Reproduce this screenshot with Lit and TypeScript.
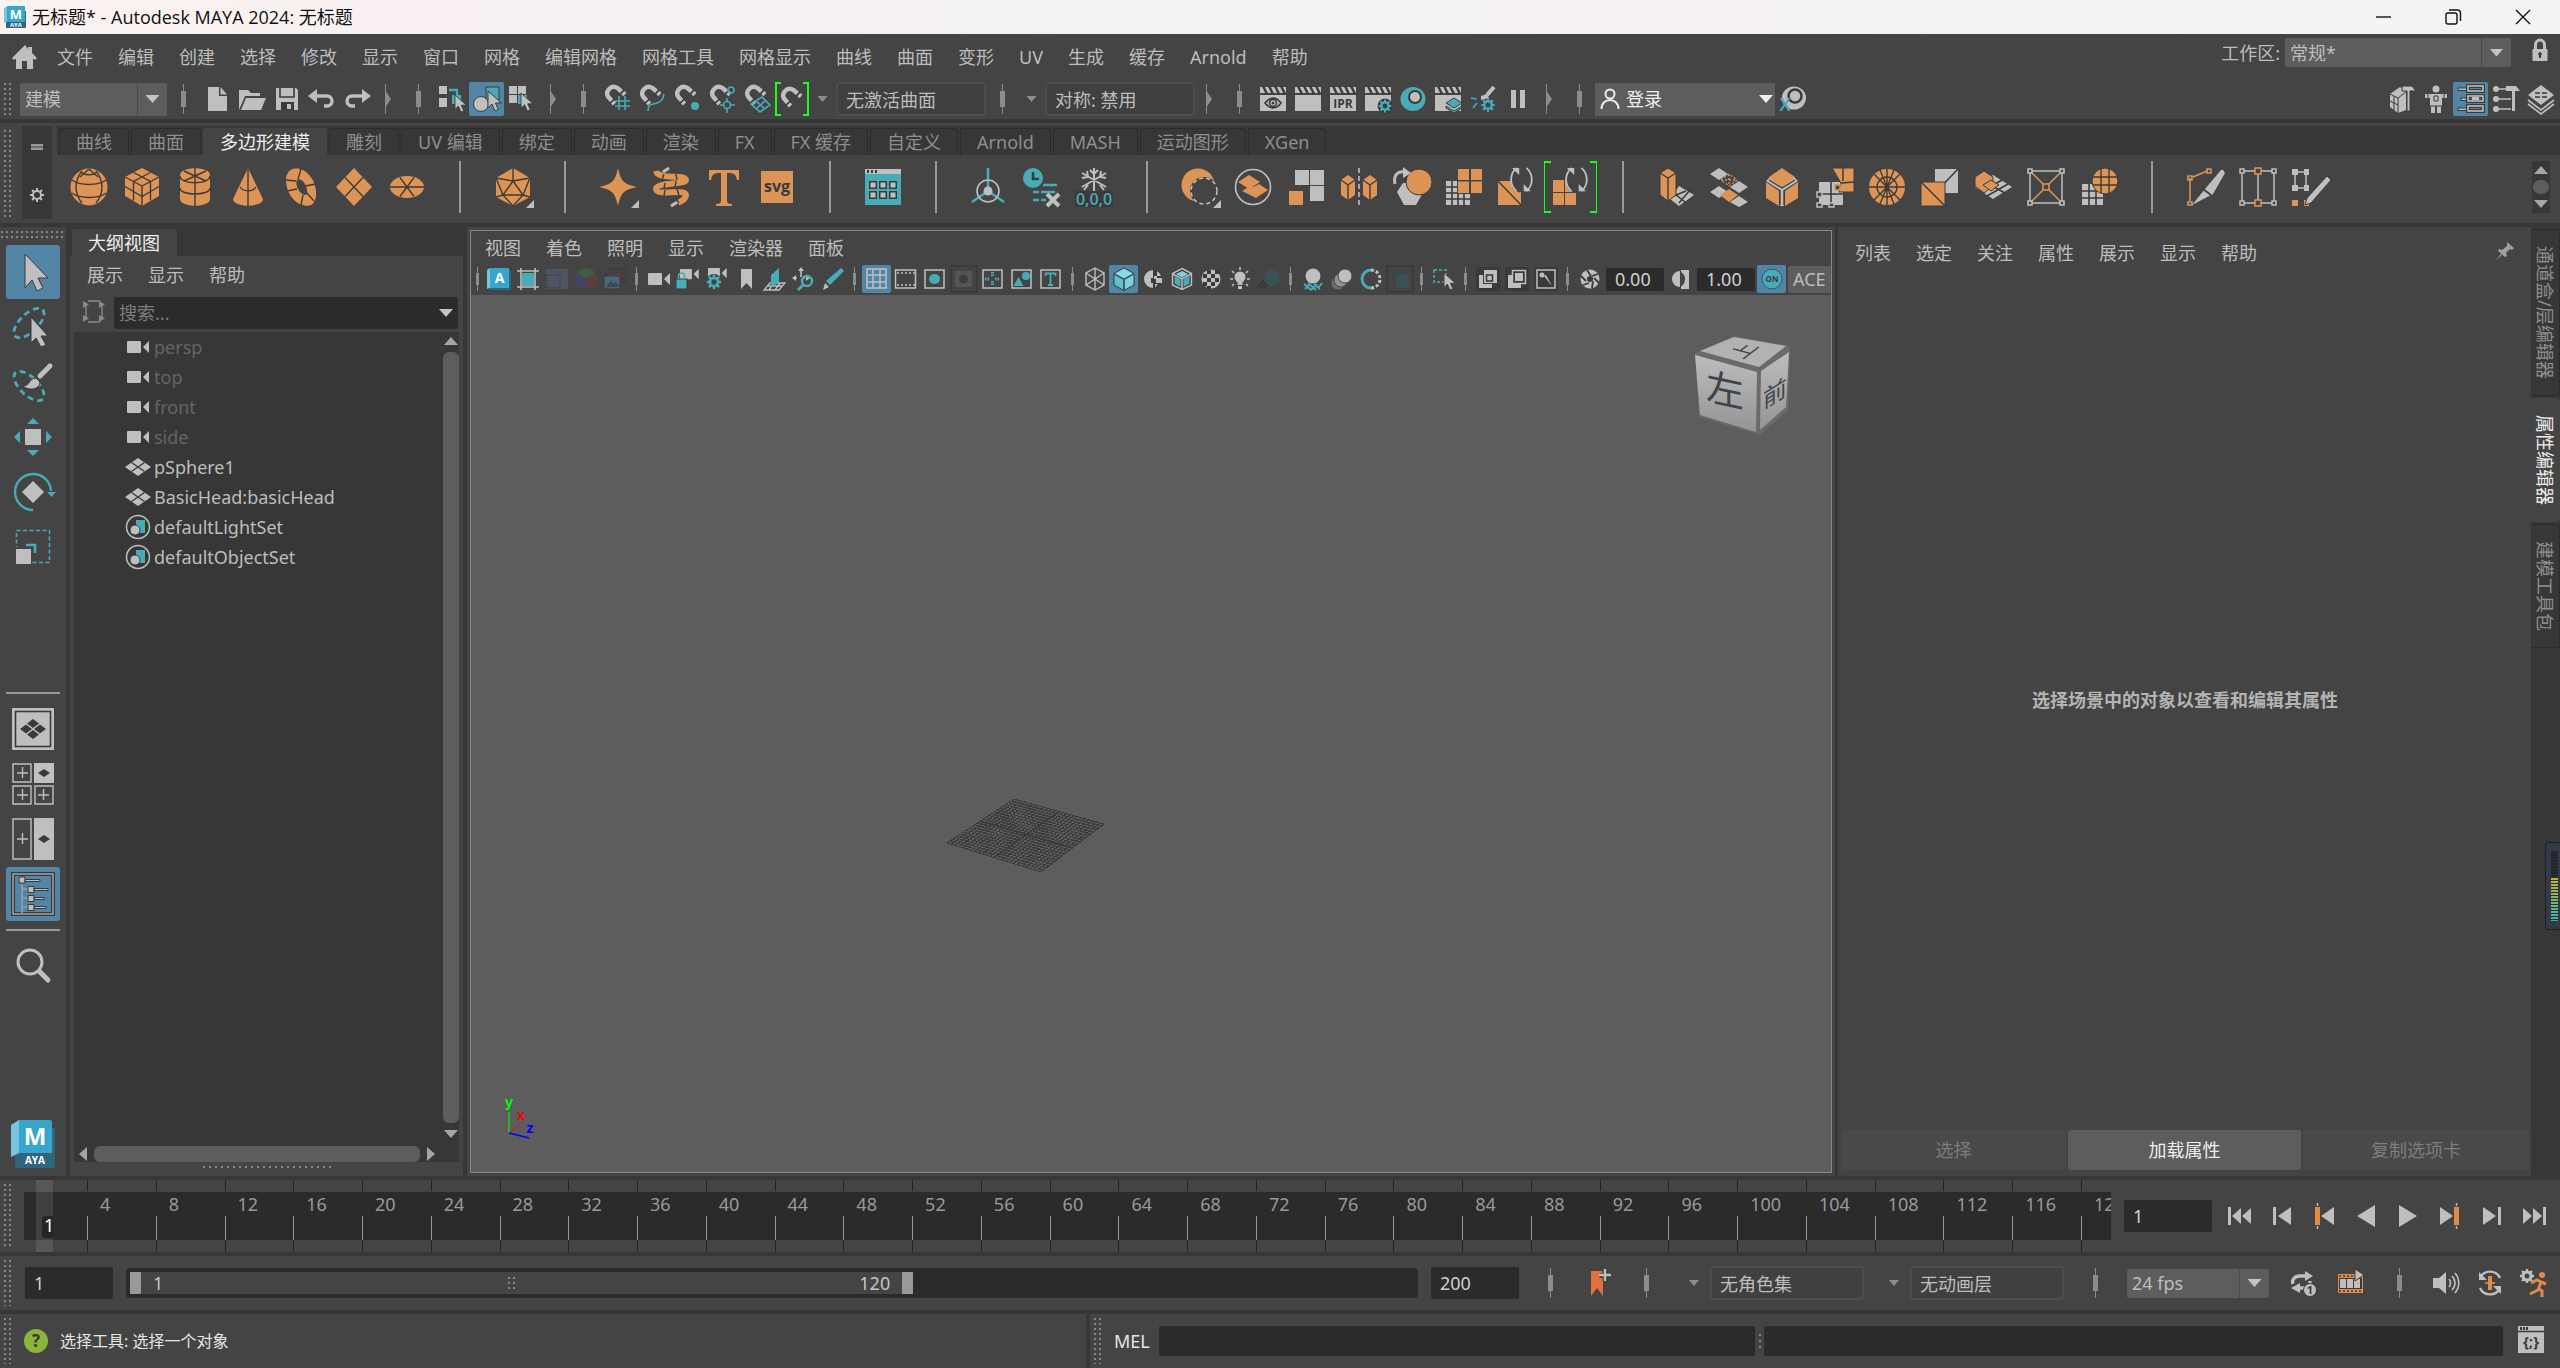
import { LitElement, html, css, svg, nothing, TemplateResult, SVGTemplateResult } from 'lit';
import { customElement, property, state } from 'lit/decorators.js';
import { classMap } from 'lit/directives/class-map.js';

type Glyph = [number, SVGTemplateResult];

const HORSESHOE = svg`
  <path class="sg" stroke-width="4.4" d="M12.5 20 6 12.5A6.6 6.6 0 0 1 15.5 4L23 10.5"/>
  <path class="sd" stroke-width="1.6" d="M7.6 19.4l5-4.4M17.8 10.6l4.4-5"/>`;

const CLAPPER = svg`
  <rect class="g" x="2" y="11" width="26" height="16"/>
  <rect class="g" x="2" y="3" width="26" height="6"/>
  <path class="sd" stroke-width="2.4" d="M5 2l4 8M11 2l4 8M17 2l4 8M23 2l4 8"/>`;

const POINTER = svg`<path class="g e" d="M0 0v17l4-4 3 7 3.400-1.500-3-6.500h6z"/>`;

const GEAR_T = svg`
  <circle class="st" stroke-width="3" cx="0" cy="0" r="4.500"/>
  <path class="st" stroke-width="2.600" d="M0-8v3M0 5v3M-8 0h3M5 0h3M-5.700-5.700l2.200 2.200M3.500 3.500l2.200 2.200M-5.700 5.700l2.200-2.200M3.500-3.500l2.200-2.200"/>`;

const CAMERA = svg`<rect class="g" x="0" y="0" width="14" height="12" rx="1"/><path class="g" d="M16 6l6-6v12z"/>`;

const SWIRL = svg`<path class="sg" stroke-width="2" d="M5 1C-3 8-3 20 5 27M16 1c8 7 8 19 0 26"/><path class="g" d="M0 1h8v8zM21 27h-8v-8z"/>`;

const GLYPHS: Record<string, Glyph> = {
  // menu bar
  home: [30, svg`<path class="g" d="M15 3 2 16l2 2 2-1.500V27h6v-8h5v8h6V16.500l2 1.500 2-2-5-5V5h-4v2z"/>`],
  lock: [24, svg`<path class="sg" stroke-width="3" d="M7.500 12V7a4.500 5 0 0 1 9 0v5"/><rect class="g" x="4.500" y="11" width="15" height="12" rx="1"/><path class="d" d="M12 14a2 2 0 0 1 1 3.500v2.500h-2v-2.500a2 2 0 0 1 1-3.500z"/>`],
  minimize: [20, svg`<path class="sk" d="M3 10h15"/>`],
  restore: [20, svg`<rect class="sk" x="3" y="6" width="11" height="11" rx="2"/><path class="sk" d="M6 3h8.500a3 3 0 0 1 3 3V14"/>`],
  close: [20, svg`<path class="sk" d="M3 3l14 14M17 3 3 17"/>`],
  maya: [54, svg`<g transform="translate(-4 0)">
    <path fill="#2f657f" d="M13 12h40v38a2 2 0 0 1-2 2H15a2 2 0 0 1-2-2z"/>
    <path fill="#7ac5de" d="M9 9l8-5v33l-8 4z"/>
    <path fill="#37a5cc" d="M17 4h31a2 2 0 0 1 2 2v31H17z"/>
    <text x="33" y="29" class="mark" font-size="24">M</text>
    <text x="33" y="48" class="mark" font-size="10">AYA</text></g>`],
  mayaSmall: [24, svg`
    <path fill="#2f657f" d="M3 6h20v16a1 1 0 0 1-1 1H3z"/>
    <path fill="#7ac5de" d="M1 3l4-2v15l-4 2z"/>
    <path fill="#37a5cc" d="M4 1h18v16H4z"/>
    <text x="13" y="14" class="mark" font-size="13">M</text>
    <text x="13" y="22" class="mark" font-size="6">AYA</text>`],

  // status line
  fileNew: [30, svg`<path class="g" d="M6 3h11v9h8v15H6z"/><path class="g" d="M18.500 3l6.500 7.500h-6.500z"/>`],
  fileOpen: [30, svg`<path class="g" d="M2 26V6h9l3 3h9v3H8z"/><path class="g" d="M9 14h20l-5 12H4z"/>`],
  fileSave: [30, svg`<path class="g" d="M4 4h20l2 2v20H4z"/><path class="sd" d="M8 4v9h14V4"/><rect class="d" x="9" y="18" width="13" height="8"/><rect class="g" x="15" y="20" width="4" height="5"/>`],
  undo: [30, svg`<path class="sg" stroke-width="3.400" d="M7 12h13a5 5 0 0 1 0 10h-3"/><path class="g" d="M10 5v14l-9-7z"/>`],
  redo: [30, svg`<path class="sg" stroke-width="3.400" d="M23 12H10a5 5 0 0 0 0 10h3"/><path class="g" d="M20 5v14l9-7z"/>`],
  selHierarchy: [30, svg`<rect class="g" x="2" y="2" width="8" height="8"/><rect class="g" x="2" y="14" width="8" height="9"/><path class="sd" stroke-width="1" d="M6 10v4"/><path class="st" stroke-width="2.400" d="M12 6h8v7"/><rect class="t" x="15" y="11" width="9" height="9"/><g transform="translate(18 11) scale(.85)">${POINTER}</g>`],
  selObject: [34, svg`<rect class="t e" x="16" y="5" width="13" height="14"/><circle class="g e" cx="11" cy="22" r="7.500"/><g transform="translate(18 9)">${POINTER}</g>`],
  selComponent: [30, svg`<rect class="g" x="2" y="2" width="8" height="8"/><rect class="g" x="11" y="2" width="8" height="8"/><rect class="g" x="2" y="11" width="8" height="8"/><rect class="t" x="11" y="11" width="9" height="9"/><g transform="translate(14 9) scale(.9)">${POINTER}</g>`],
  snapGrid: [30, svg`${HORSESHOE}<path class="st" d="M17 12v14M23 12v14M13 17h15M13 22h15"/>`],
  snapCurve: [30, svg`${HORSESHOE}<path class="st" d="M11 27c0-8 4-6 9-8s6-4 7-9"/>`],
  snapPoint: [30, svg`${HORSESHOE}<circle class="t" cx="23" cy="22" r="4"/>`],
  snapCenter: [30, svg`${HORSESHOE}<circle class="st" cx="24" cy="6" r="3"/><circle class="st" cx="20" cy="21" r="3.500"/><path class="st" d="M20 14v3M20 25v4M13 21h3M24 21h4"/>`],
  snapPlane: [30, svg`${HORSESHOE}<path class="st" d="M9 20l11-7 8 8-10 7zM14 17l9 8M23 17l-9 8"/>`],
  makeLive: [34, svg`<g transform="translate(3 4)">${HORSESHOE}</g><path class="sl" d="M6 1H1v32h5M28 1h5v32h-5"/>`],
  renderEye: [30, svg`${CLAPPER}<path class="sd" stroke-width="1.600" d="M7 19c5-6.500 11-6.500 16 0-5 6.500-11 6.500-16 0z"/><circle class="sd" stroke-width="1.500" cx="15" cy="19" r="3.500"/><circle class="d" cx="15" cy="19" r="1.500"/>`],
  renderFrame: [30, svg`${CLAPPER}`],
  renderIpr: [30, svg`${CLAPPER}<text x="15" y="24" class="ink" font-size="12">IPR</text>`],
  renderSettings: [30, svg`${CLAPPER}<circle class="d" cx="22" cy="22" r="7.500"/><g transform="translate(22 22) scale(.8)">${GEAR_T}</g>`],
  hypershade: [30, svg`<ellipse class="t" cx="15" cy="15" rx="12.500" ry="12"/><circle class="d" cx="17" cy="13" r="7"/><circle class="g" cx="17" cy="13" r="5"/>`],
  renderSetup: [30, svg`${CLAPPER}<path class="t e" d="M21 14l8 5-8 5-8-5z"/><path class="t e" d="M13 22l8 5 8-5v2l-8 5-8-5z"/>`],
  lightEditor: [30, svg`<path class="sg" stroke-width="4" d="M26 3l-7 8"/><path class="g" d="M13 12l6-2 2 4-8 2z"/><path class="st" d="M3 14l6 1M5 24l4-5"/><g transform="translate(20 21) scale(.85)">${GEAR_T}</g>`],
  pause: [30, svg`<rect class="g" x="8" y="6" width="5" height="18"/><rect class="g" x="17" y="6" width="5" height="18"/>`],
  user: [24, svg`<circle class="sw" cx="12" cy="7" r="4.500"/><path class="sw" d="M3.500 22c0-12 17-12 17 0"/>`],
  xgenRing: [34, svg`<ellipse class="g" cx="18" cy="16" rx="12" ry="11.500"/><circle class="sd" stroke-width="2.500" cx="19" cy="14" r="6.500"/><text x="9" y="29" class="teal" font-size="18">X</text>`],
  modelingKit: [34, svg`<path class="g" d="M6 12l10-7 6 4v19l-8 3-8-6z"/><path class="sd" stroke-width="1" d="M6 12l8 4 8-6M14 16v15M10 14v14M6 19l8 4"/><path class="g e" d="M18 4h10l4 5h-6v20h-3V9h-5z"/>`],
  humanIk: [34, svg`<circle class="g" cx="17" cy="7" r="3.500"/><path class="g" d="M6 12h22v4h-5v7l-1 2v6h-4v-7h-2v7h-4v-6l-1-2v-7H6z"/><path class="sd" stroke-width="1" d="M9 12v4M25 12v4M15 14h4v5h-4zM11 24h12"/>`],
  channelBox: [34, svg`<g class="e g"><rect x="4" y="6" width="10" height="2.500"/><rect x="7" y="16" width="8" height="2.500"/><rect x="4" y="26" width="10" height="2.500"/></g><g fill="#5285a6" stroke="#3a3a3a" stroke-width="4"><rect x="14" y="4" width="15" height="5"/><rect x="14" y="14" width="15" height="5"/><rect x="14" y="24" width="15" height="5"/></g><g class="sg"><rect x="14" y="4" width="15" height="5"/><rect x="14" y="14" width="15" height="5"/><rect x="14" y="24" width="15" height="5"/></g><path class="g" d="M18 15h7v3h-7z"/>`],
  toolSettings: [34, svg`<circle class="g" cx="7" cy="7" r="3"/><circle class="g" cx="7" cy="17" r="3"/><circle class="g" cx="7" cy="27" r="3"/><path class="sg" d="M10 7h8M10 17h12M10 27h12"/><path class="g" d="M17 4h10l4 5h-5v20h-3V9h-6z"/>`],
  layerStack: [34, svg`<path class="g" d="M17 3l13 10-13 10L4 13z"/><path class="sg" d="M4 18l13 10 13-10M4 22l13 10 13-10"/><path class="sd" stroke-width="1.500" d="M11 11h5M18 11h5M11 15h5M18 15h5"/>`],

  // shelf
  sphere: [40, svg`<circle class="o" cx="20" cy="20" r="18.500"/><path class="se" d="M3 13c8 6 26 6 34 0M3 26c8 6 26 6 34 0M13 4c-8 10-8 22 0 32M27 4c8 10 8 22 0 32M12 4c2 5 14 5 16 0M20 2l-9 8M20 2l9 8"/>`],
  cube: [40, svg`<path class="o" d="M20 1l17 9v19l-17 10L3 29V10z"/><path class="se" d="M3 10l17 9 17-9M20 19v20M11.500 5.500l17 9v19M28.500 5.500l-17 9v19M3 19.500l17 10 17-10"/>`],
  cylinder: [40, svg`<path class="o" d="M5 8C5-1 35-1 35 8v24c0 9-30 9-30 0z"/><path class="se" d="M5 9c0 9 30 9 30 0M5 21c0 8 30 8 30 0M9 4l22 10M31 4 9 14M20 1v38"/>`],
  cone: [40, svg`<path class="o" d="M20 1l15 31c0 9-30 9-30 0z"/><path class="se" d="M20 2v37M12 20c3 5 13 5 16 0"/>`],
  torus: [40, svg`<path class="o" fill-rule="evenodd" d="M12 2C22-1 34 10 35 24c1 12-5 17-13 14C12 36 5 24 5 13 5 7 8 3 12 2zM17 12c-4 2 0 15 7 16 5 0 1-16-7-16z"/><path class="se" d="M5 13l10 1M17 12l3-10M24 19l11-2M22 28l-2 10M16 22L6 24M25 25l8 9"/>`],
  plane: [40, svg`<path class="o" d="M20 1l18 19-18 19L2 20z"/><path class="se" d="M11 10.500l18 19M29 10.500l-18 19"/>`],
  disc: [40, svg`<ellipse class="o" cx="20" cy="20" rx="17" ry="11"/><path class="se" d="M3 20h34M13 10.500l14 19M27 10.500l-14 19"/>`],
  platonic: [40, svg`<path class="o" d="M20 1l17 10v19L20 39 3 30V11z"/><path class="se" d="M3 11l17 3 17-3M20 1v13L10 28l10 11 10-11-10-14M3 11l7 17-7 2M37 11l-7 17 7 2M10 28h20"/><path class="g" d="M41 33v8h-8z"/>`],
  star: [40, svg`<path class="o" d="M20 1c3 13 5 16 19 19-14 3-16 6-19 19C17 26 15 23 1 20 15 17 17 14 20 1z"/><path class="g" d="M41 33v8h-8z"/>`],
  helix: [40, svg`<path class="sg" stroke-width="3" d="M12 5l6-4M20 39l8-5"/><path class="so" stroke-width="6" d="M5 4C7 14 34 6 35 13C35 18 5 15 5 22C6 30 34 21 35 28C35 32 32 33 27 36"/><path class="se" d="M13 7l-2 6M25 7l1 6M25 14l-1 6M14 16l-1 5M14 23l-1 6M26 22l2 6M24 31l4 5"/>`],
  type: [40, svg`<path class="o" d="M5 3h30v10h-2c-1-6-3-7-10-7v27c0 3 1 4 5 4v2H12v-2c4 0 5-1 5-4V6C10 6 8 7 7 13H5z"/>`],
  svgImport: [40, svg`<rect class="o" x="4" y="4" width="32" height="32"/><text x="20" y="25" class="ink" font-size="16">svg</text>`],
  contentBrowser: [40, svg`<rect class="t" x="2" y="2" width="36" height="36"/><rect class="g" x="2" y="2" width="36" height="5"/><path class="d" d="M4 3h2v3H4zM8 3h2v3H8zM12 3h2v3h-2zM6 14h8v8H6zM16 14h8v8h-8zM26 14h8v8h-8zM6 24h8v8H6zM16 24h8v8h-8zM26 24h8v8h-8z"/><path class="g" d="M7.500 15.500h5v5h-5zM17.500 15.500h5v5h-5zM27.500 15.500h5v5h-5zM7.500 25.500h5v5h-5zM17.500 25.500h5v5h-5zM27.500 25.500h5v5h-5z"/>`],
  orient: [40, svg`<path class="st" d="M20 1v20M20 24L4 35M20 24l16 11" stroke-width="2.500"/><circle class="sg" cx="20" cy="24" r="11"/><circle class="g" cx="20" cy="24" r="4.500"/>`],
  history: [40, svg`<circle class="t" cx="12" cy="11" r="10"/><path class="sd" stroke-width="2.500" d="M12 5v7h6"/><path class="st" stroke-width="2.500" d="M22 18h14M12 25h6M20 25h14M12 33h6M20 33h5"/><path class="sg" stroke-width="4" d="M26 27l12 12M38 27L26 39"/>`],
  freeze: [40, svg`<path class="sg" stroke-width="2" d="M20 1v24M8 6l24 14M32 6L8 20M16 3l4 4 4-4M8 11l6-1-1-6M32 11l-6-1 1-6M10 23l4-5M30 23l-4-5"/><rect class="d" x="1" y="24" width="38" height="16"/><text x="20" y="38" class="teal" font-size="16">0,0,0</text>`],
  booleanDiff: [40, svg`<circle class="o" cx="18" cy="18" r="16.500"/><circle class="d0" cx="24" cy="24" r="14"/><circle class="sg" cx="24" cy="24" r="13" stroke-dasharray="4 3"/><path class="g" d="M41 33v8h-8z"/>`],
  combine: [40, svg`<circle class="sg" cx="20" cy="20" r="17.500"/><path class="o" d="M5 15l11-7 11 7-11 7zM9 24l8-5 3 1 6-3 9 6-12 8z"/><path class="o" d="M5 17l8 5"/>`],
  separate: [40, svg`<path class="g" d="M9 3h14v15H9zM24 3h14v15H24zM24 19h14v15H24z"/><rect class="o" x="3" y="24" width="14" height="14"/>`],
  mirror: [40, svg`<path class="o" d="M2 13l7-5 7 5v15l-7 5-7-5zM24 13l7-5 7 5v15l-7 5-7-5z"/><path class="se" d="M2 13l7 5 7-5M9 18v15M24 13l7 5 7-5M31 18v15"/><path class="sg" stroke-dasharray="5 3" d="M20 1v38"/>`],
  smooth: [40, svg`<path class="g" d="M11 16h15l6 8-8 14H12L5 25z"/><circle class="o e" cx="27" cy="15" r="13"/><path class="sg" stroke-width="3" d="M3 17C1 8 6 4 12 5"/><path class="g" d="M11 0l8 6-8 5z"/>`],
  fillHole: [40, svg`<path class="g" d="M2 14h24v24H2z"/><path class="sd" d="M8 14v24M14 14v24M20 14v24M2 20h24M2 26h24M2 32h24"/><rect class="d0" x="13" y="1" width="26" height="26"/><path class="o" d="M14 2h11v11H14zM27 2h11v11H27zM14 14.500h11V26H14zM27 14.500h11V26H27z"/>`],
  triangulate: [40, svg`<path class="o" d="M1 14h23v24H1z"/><path class="se" d="M1 14l23 24"/><g transform="translate(15 0) scale(.9)"><rect class="d0" x="0" y="0" width="22" height="28" rx="8"/>${SWIRL}</g>`],
  quadrangulate: [48, svg`<path class="o" d="M7 17h11v12H7zM19 17h11v12H19zM7 30h11v12H7zM19 30h11v12H19z"/><g transform="translate(21 4) scale(.9)"><rect class="d0" x="0" y="0" width="22" height="28" rx="8"/>${SWIRL}</g>`],
  extrude: [40, svg`<path class="g" d="M23 19l15 9-15 11-9-7z"/><path class="sd" d="M15 30l15-6M23 36l11-13M19 27l10 8"/><path class="o e" d="M4 6l8-5 8 5v22l-8 6-8-6z"/><path class="se" d="M4 6l8 5 8-5M12 11v22"/>`],
  bridge: [40, svg`<path class="g" d="M1 7l9-6 9 6-9 6zM21 20l9-6 9 6-9 6zM1 25l9-6 9 6-9 6zM21 35l9-6 9 6-9 5z"/><path class="o" d="M11 28l9-6 9 6-9 7z"/><path class="so" stroke-width="1.300" stroke-dasharray="2 2" d="M12 13l8-6 8 6-8 6zM12 13h16M20 7v12"/>`],
  bevel: [40, svg`<path class="o" d="M20 1l13 9v3L20 20 7 13v-3z"/><path class="o" d="M4 15l13 9v15L4 31zM36 15l-13 9v15l13-8z"/><path class="g" d="M7 11l13 9 13-9 3 3-14 9v16h-4V23L4 14z"/><path class="se" d="M7 13l13 8 13-8M18 23v15M22 23v15"/>`],
  bevelPlane: [40, svg`<path class="g" d="M4 15h24v23H4z"/><path class="sd" d="M16 15v23M4 27h24"/><path class="o e" d="M17 1h22v24H24l2-9z"/><path class="se" d="M26 16l13-1M28 1v13"/><path class="d0 eg" d="M2 25h5v5H2zM2 36h5v4H2zM14 36h5v4h-5z"/><rect class="d0 eo" x="20" y="18" width="5" height="5"/>`],
  circularize: [40, svg`<circle class="o" cx="20" cy="20" r="18"/><circle class="se" cx="20" cy="20" r="10"/><path class="se" d="M2 20h36M20 2v36M7 7l26 26M33 7 7 33M13 3l14 34M27 3 13 37"/>`],
  collapseEdge: [40, svg`<path class="g" d="M15 2h23v24H15z"/><path class="sd" d="M38 2L15 26"/><path class="o e" d="M1 15h24v24H1z"/><path class="se" d="M1 15l24 24"/>`],
  connect: [40, svg`<path class="g" d="M20 8l19 12-19 12L2 20z"/><path class="sd" d="M8 25l21-12M14 29l21-12M8 13l24 13"/><path class="o e" d="M2 10l9-6 9 6v9l-9 7-9-7z"/><path class="o e" d="M10 18l8-5 8 5-8 6z"/>`],
  targetWeld: [40, svg`<path class="sg" stroke-width="1.500" d="M6 4h28M6 36h28M4 6v28M36 6v28"/><path class="so" stroke-width="1.500" d="M6 6l11 11M34 6L23 17M6 34l11-11M34 34L23 23"/><path class="sg" stroke-width="1.600" d="M2 2h4v4H2zM34 2h4v4h-4zM2 34h4v4H2zM34 34h4v4h-4z"/><rect class="so" x="17" y="17" width="6" height="6"/>`],
  projectCurve: [40, svg`<path class="g" d="M3 17h21v21H3z"/><path class="sd" d="M10 17v21M17 17v21M3 24h21M3 31h21"/><circle class="o e" cx="26" cy="14" r="13"/><path class="se" d="M14 10h24M14 18h24M22 2v24M30 2v24"/>`],
  multiCut: [40, svg`<path class="so" stroke-width="1.500" d="M5 11v23M8 10l14-6"/><path class="so" d="M3 9h4v4H3zM22 2h4v4h-4zM3 35h4v3H3z"/><path class="g" d="M38 3l2 3-12 21L7 38 20 22 36 3z"/><path class="sd" d="M18 22l8 6"/>`],
  edgeLoop: [40, svg`<path class="sg" stroke-width="1.500" d="M4 6v28M36 6v28M20 6v28M6 4h28M6 36h28"/><path class="d0 eg" d="M2 2h4v4H2zM34 2h4v4h-4zM2 34h4v4H2zM34 34h4v4h-4z"/><path class="d0 eo" d="M17 1h6v6h-6zM17 33h6v6h-6z"/>`],
  quadDraw: [40, svg`<path class="g" d="M1 2h6v6H1zM13 2h5v6h-5zM1 18h6v6H1zM13 18h5v6h-5z"/><path class="sg" stroke-width="1.500" d="M5 5h10M5 21h10M4 5v16M15 5v16"/><path class="o" d="M1 33h6v6H1zM13 33h5v6h-5z"/><path class="g e" d="M36 9l4 4-20 23-6 2 2-7z"/>`],
  gearSmall: [14, svg`<circle class="sg" stroke-width="2" cx="7" cy="7" r="4"/><path class="sg" stroke-width="2" d="M7 0v3M7 11v3M0 7h3M11 7h3M2 2l2 2M10 10l2 2M12 2l-2 2M2 12l2-2"/>`],

  // toolbox
  toolSelect: [54, svg`<path class="g e" d="M19 9v34l7-8 5 11 6-3-5-10h10z"/>`],
  toolLasso: [54, svg`<ellipse class="st" stroke-width="2.800" stroke-dasharray="6 4" cx="23" cy="23" rx="19" ry="9" transform="rotate(-44 23 23)"/><path class="g e" d="M25 17v26l5-5 5 9 5-2-5-9h7z"/>`],
  toolPaint: [54, svg`<ellipse class="st" stroke-width="2.800" stroke-dasharray="6 4" cx="23" cy="31" rx="19" ry="9" transform="rotate(44 23 31)"/><path class="sg" stroke-width="5" stroke-linecap="round" d="M44 11L34 21"/><path class="g e" d="M17 31c7 0 6-8 13-8l4 4c0 8-12 9-17 4z"/>`],
  toolMove: [54, svg`<rect class="g" x="19" y="19" width="16" height="16"/><path class="t" d="M27 8l6 6H21zM27 46l6-6H21zM8 27l6-6v12zM46 27l-6-6v12z"/>`],
  toolRotate: [54, svg`<path class="st" stroke-width="2.400" d="M27 45A18 18 0 1 1 45 26"/><path class="t" d="M41 27h9l-4.500 5z"/><path class="g" d="M27 16l11 11-11 11-11-11z"/>`],
  toolScale: [54, svg`<rect class="st" stroke-dasharray="4 2.500" x="10.500" y="10.500" width="33" height="32"/><rect class="d0" x="8" y="27" width="18" height="18"/><rect class="g" x="10" y="29" width="15" height="15"/><path class="st" stroke-width="2.500" d="M20 25h9v8"/>`],
  layoutSingle: [54, svg`<rect class="g" x="6" y="6" width="42" height="42"/><rect class="sd" x="9.500" y="9.500" width="35" height="35"/><path class="d" d="M27 17l6 4.500-6 4.500-6-4.500zM27 28l6 4.500-6 4.500-6-4.500zM20 22.500l6 4.500-6 4.500-6-4.500zM34 22.500l6 4.500-6 4.500-6-4.500z"/>`],
  layoutFour: [54, svg`<path class="sg" stroke-width="1.400" d="M7 7h18v18H7zM7 29h18v18H7zM29 29h18v18H29zM11 16h11M16.500 10v11M11 38h11M16.500 32v11M32 38h11M37.500 32v11"/><rect class="g" x="28" y="6" width="20" height="20"/><path class="d" d="M38 12l6 4-6 4-6-4z"/>`],
  layoutTwo: [54, svg`<path class="sg" stroke-width="1.400" d="M7 7h18v40H7zM11 27h11M16.500 21v11"/><rect class="g" x="28" y="6" width="20" height="42"/><path class="d" d="M38 23l6 4-6 4-6-4z"/>`],
  layoutOutliner: [54, svg`<rect class="sd" stroke-width="4" x="7" y="7" width="40" height="40"/><rect class="sg" stroke-width="1.200" x="7" y="7" width="40" height="40"/><path class="s5" stroke-width="1.600" d="M16 17v29M17 22h5M17 31h5M17 40h5"/><path class="g e" d="M19 12.500h15v2H19zM28 21.500h14v2H28zM28 30.500h10v2H28zM28 39.500h12v2H28zM13 10h6v6h-6zM22 19.500h6v6h-6zM22 28.500h6v6h-6zM22 37.500h6v6h-6z"/>`],
  search: [54, svg`<circle class="sg" stroke-width="3" cx="24" cy="23" r="12"/><path class="sg" stroke-width="5" stroke-linecap="round" d="M34 33l8 8"/>`],

  // outliner
  filter: [24, svg`<path class="s8" stroke-width="1.400" d="M6 2h12M6 23h12M4 6v13M20 6v13"/><path fill="#8a8a8a" d="M1 2l6 3.500L1 9zM17 2l6 3.500L17 9zM1 16l6 3.500L1 23zM17 16l6 3.500-6 3.500z"/>`],
  camera: [26, svg`<g transform="translate(2 7)">${CAMERA}</g>`],
  mesh: [26, svg`<path class="g" d="M13 4l13 9-13 9L0 13z"/><path class="sd" stroke-width="1.400" d="M6.500 8.500l13 9M19.500 8.500l-13 9"/>`],
  objectSet: [26, svg`<circle class="sg" stroke-width="1.500" cx="13" cy="13" r="11.500"/><rect class="t" x="11" y="6" width="9" height="13"/><circle class="g e" cx="10" cy="16" r="5"/>`],

  // viewport toolbar
  vA: [24, svg`<path fill="#7ac5de" d="M0 3l3-2v20l-3 1z"/><path fill="#2f657f" d="M3 3h21v20H3z"/><path fill="#37a5cc" d="M3 1h19v20H3z"/><text x="12.500" y="16" class="mark" font-size="14">A</text>`],
  vFrame: [24, svg`<rect class="t" x="6" y="6" width="12" height="13"/><path class="sg" d="M5 1v22M19 1v22M1 4h22M1 20h22"/>`],
  vRegion: [24, svg`<rect fill="#4c5663" x="1" y="2" width="22" height="20"/><rect x="2" y="8" width="13" height="13" fill="none" stroke="#333" stroke-dasharray="1.500 1.500"/>`],
  vColor: [24, svg`<path fill="#425b45" d="M12 12L3 6a10.500 10.500 0 0 1 18 0z"/><path fill="#5d3d3f" d="M12 12l9-6a10.500 10.500 0 0 1-9 16.500z"/><path fill="#3f4563" d="M12 12v10.500A10.500 10.500 0 0 1 3 6z"/>`],
  vImages: [24, svg`<g stroke="#3a3a3a"><path fill="#3c4f3d" d="M7 1h16v13H7z"/><path fill="#57403a" d="M5 3h16v13H5z"/><path fill="#5a3f4f" d="M3 6h16v13H3z"/><path fill="#4b6676" d="M1 9h16v13H1z"/></g><path fill="#3a4a55" d="M3 20l5-6 3 3 2-2 3 5z"/>`],
  vCamera: [24, svg`<g transform="translate(1 6)">${CAMERA}</g>`],
  vCamLock: [24, svg`<g transform="translate(4 2) scale(.85)">${CAMERA}</g><rect class="t e" x="0" y="12" width="11" height="10"/><path class="st" d="M2.500 12V9a3 3 0 0 1 6 0v3"/>`],
  vCamGear: [24, svg`<g transform="translate(3 1) scale(.85)">${CAMERA}</g><circle class="d0" cx="9" cy="15" r="8"/><g transform="translate(9 15) scale(.9)">${GEAR_T}</g>`],
  vBookmark: [24, svg`<path class="g" d="M7 2h11v20l-5.500-6L7 22z"/>`],
  vPlane: [24, svg`<path class="sg" stroke-width="1.300" d="M7 16h15l-6 7H1zM11 16l-5 7M17 16l-5 7M4 19h15"/><path class="t" d="M8 8l8-7v14l-8 6z"/>`],
  vZoom: [24, svg`<path class="sg" stroke-width="1.600" d="M9 3v7M5 11H1M10 11h3"/><path class="g" d="M9 0l3 4H6zM0 11l4-3v6zM18 11l-4-3v6z"/><circle class="st" stroke-width="2.400" cx="15" cy="14" r="5"/><path class="st" stroke-width="3" d="M11 18l-5 5"/>`],
  vPencil: [24, svg`<path class="t" d="M20 1l3 3L9 18l-4-4z"/><path class="g" d="M4 16l4 4-6 3z"/>`],
  vGrid: [24, svg`<rect class="sg" x="2" y="2" width="19" height="19"/><path class="sg" stroke-width="1.500" d="M8 2v19M15 2v19M2 8h19M2 15h19"/>`],
  vFilm: [24, svg`<rect class="sg" stroke-width="1.500" x="1.500" y="3" width="20" height="18"/><path class="sg" stroke-dasharray="2 2" d="M3 6h18M3 18h18"/>`],
  vGate: [24, svg`<rect class="sg" stroke-width="1.500" x="2" y="3" width="19" height="18"/><ellipse class="t" cx="11.500" cy="12" rx="5.500" ry="5"/>`],
  vMask: [28, svg`<rect x="1" y="1" width="26" height="26" fill="none" stroke="#333"/><rect x="5" y="6" width="17" height="16" fill="#555"/><circle cx="13.500" cy="14" r="4.500" fill="#3d3d3d"/>`],
  vChart: [24, svg`<rect class="sg" stroke-width="1.500" x="2" y="3" width="19" height="18"/><path class="st" stroke-width="3" stroke-dasharray="1.500 1" d="M11.500 5v5M11.500 14v5M4 12h5M14 12h5"/>`],
  vSafe: [24, svg`<rect class="sg" stroke-width="1.500" x="2" y="3" width="19" height="18"/><path class="t" d="M3.500 19l5-9 5 9z"/><circle class="t" cx="16" cy="9" r="4"/>`],
  vTitle: [24, svg`<rect class="sg" stroke-width="1.500" x="2" y="3" width="19" height="18"/><path class="st" stroke-width="1.800" d="M6.500 9V6.500h10V9M11.500 6.500V18M9 18h5"/>`],
  vWire: [24, svg`<path class="sg" stroke-width="1.400" d="M12 1l9 5v12l-9 5-9-5V6zM12 1v22M3 6l18 12M21 6L3 18"/>`],
  vShaded: [24, svg`<path fill="#8adbe3" d="M12 1l10 5.500L12 12 2 6.500z"/><path fill="#5cc4d0" d="M2 8l9 5v10l-9-5z"/><path fill="#7ed2dc" d="M22 8l-9 5v10l9-5z"/><path class="sd" stroke-width="1" d="M12 1l10 5.500V18l-10 5.500L2 18V6.500zM2 6.500L12 12l10-5.500M12 12v11"/>`],
  vMaterial: [24, svg`<path class="g" d="M12 3a9 9 0 0 0 0 18v-5h-2v-5h2z"/><path class="d" d="M12 3a9 9 0 0 1 0 18v-5h-2v-5h2z"/><path class="g" d="M16 4a9 9 0 0 1 4 5h-4zM15 11h6v5h-6zM14 17h3l-3 3.500zM13 9h3v3h-3z"/>`],
  vWireShaded: [24, svg`<path class="d" d="M12 0l11 6v12l-11 6L1 18V6z"/><path fill="#7ed2dc" d="M12 4l6 3-6 3.500L6 7z"/><path class="t" d="M4.500 9l6 3.500V20l-6-3.500zM19.500 9l-6 3.500V20l6-3.500z"/><path class="sg" stroke-width="1.500" d="M12 1.500l9.500 5V18L12 22.500 2.500 18V6.500zM2 6.500L12 12l10-5.500M12 12v10"/>`],
  vTexture: [24, svg`<circle class="g" cx="12" cy="12" r="9.500"/><path class="d" d="M8 3h4v4H8zM16 3h4v4h-4zM4 7h4v4H4zM12 7h4v4h-4zM8 11h4v4H8zM16 11h4v4h-4zM4 15h4v4H4zM12 15h4v4h-4zM8 19h4v3H8z"/>`],
  vLight: [24, svg`<circle class="g" cx="12" cy="10" r="5.500"/><path class="g" d="M9.500 14h5v4h-5zM10 19h4v3h-4z"/><path class="sg" d="M12 0v3M2 12h3M19 12h3M4 4l2 2M20 4l-2 2M4 19l2-2M20 19l-2-2"/>`],
  vShadow: [24, svg`<path stroke="#353535" stroke-width="1.500" d="M0 20l8-8M3 21l8-8M6 22l8-8"/><circle cx="15" cy="11" r="8" fill="#3a5257"/>`],
  vAo: [24, svg`<circle class="g" cx="12" cy="9" r="7.500"/><path class="st" stroke-width="2" d="M3 17l7 6M7 16l8 7M13 17l6 5M21 16l-4 5M16 17l-6 6M9 17l-5 5"/>`],
  vMotion: [24, svg`<circle cx="8" cy="16" r="7" fill="#6f6f6f" stroke="#444"/><circle cx="11" cy="13" r="7" fill="#929292" stroke="#444"/><circle class="g" cx="15" cy="9" r="7" stroke="#444"/>`],
  vAa: [24, svg`<path class="st" stroke-width="3" d="M12 3a9 9 0 0 0 0 18"/><path class="sg" stroke-width="3" stroke-dasharray="3 2" d="M12 3a9 9 0 0 1 0 18"/>`],
  vDof: [28, svg`<rect x="1" y="1" width="26" height="26" fill="none" stroke="#333"/><rect x="10" y="10" width="13" height="13" fill="#3a5257"/><path stroke="#35494d" stroke-width="2" d="M5 11l6-6M5 15L15 5"/>`],
  vSelect: [24, svg`<rect class="st" stroke-width="1.600" stroke-dasharray="3 2" x="2" y="3" width="12" height="12"/><g transform="translate(12 6) scale(.85)">${POINTER}</g>`],
  vIso1: [24, svg`<rect class="d" x="0" y="0" width="24" height="24"/><path class="g" d="M8 3h13v13H8zM3 8h4v9h9v4H3z"/><rect class="sd" x="10.500" y="8" width="6" height="6"/>`],
  vIso2: [24, svg`<rect class="d" x="0" y="0" width="24" height="24"/><path class="g" d="M3 8h4v9h9v4H3zM10 6h8v8h-8z"/><rect class="sg" stroke-width="1.500" x="7.500" y="3.500" width="13" height="13"/>`],
  vIso3: [24, svg`<rect class="d" x="0" y="0" width="24" height="24"/><rect class="sg" stroke-width="1.500" x="3" y="3" width="18" height="18"/><path class="g" d="M10 9l2-1 6 11z"/><circle class="g" cx="8" cy="8" r="2.500"/>`],
  vExposure: [24, svg`<circle class="g" cx="12" cy="12" r="9.500"/><path class="sd" stroke-width="1.800" d="M9 3l4 6M20 7l-6 2M21 16l-5-5M14 21l1-7M5 18l6-2M3 9l5 5"/><circle class="d" cx="12" cy="12" r="3"/>`],
  vGamma: [24, svg`<path class="g" d="M11 4a8 8 0 0 0 0 16zM12 3h8v19h-8v-2.500a8.500 8.500 0 0 0 0-14.500z"/>`],
  vOn: [24, svg`<circle cx="12" cy="12" r="10" fill="#48abb8" stroke="#2f5a66"/><text x="12" y="15" class="ink" font-size="8">ON</text>`],

  // attribute editor
  pin: [22, svg`<path fill="#a0a0a0" d="M13 2l7 6-2 2-2-1-4 4 1 3-2 1-7-6 1-2 3 1 5-4v-2zM7 14l1 1-6 5z"/>`],

  // playback
  playStart: [30, svg`<rect class="g" x="3" y="6" width="3" height="18"/><path class="g" d="M16 7v16L7 15zM26 7v16l-9-8z"/>`],
  playPrevFrame: [30, svg`<rect class="g" x="6" y="6" width="3" height="18"/><path class="g" d="M24 6v18l-13-9z"/>`],
  playPrevKey: [30, svg`<path class="g" d="M25 6v18l-13-9z"/><rect class="k" x="6" y="6" width="5" height="18"/><path class="sk2" d="M8.500 2v3M8.500 25v3"/>`],
  playBack: [30, svg`<path class="g" d="M24 4v22L6 15z"/>`],
  playForward: [30, svg`<path class="g" d="M6 4v22l18-11z"/>`],
  playNextKey: [30, svg`<path class="g" d="M5 6v18l13-9z"/><rect class="k" x="19" y="6" width="5" height="18"/><path class="sk2" d="M21.500 2v3M21.500 25v3"/>`],
  playNextFrame: [30, svg`<rect class="g" x="21" y="6" width="3" height="18"/><path class="g" d="M6 6v18l13-9z"/>`],
  playEnd: [30, svg`<rect class="g" x="24" y="6" width="3" height="18"/><path class="g" d="M14 7v16l9-8zM4 7v16l9-8z"/>`],
  bookmarkAdd: [30, svg`<path fill="#e07040" d="M7 3h12v25l-6-8-6 8z"/><path class="sd" stroke-width="5" d="M21 2v11M15.500 7.500h11"/><path class="sg" stroke-width="2.400" d="M21 1v12M15 7h12"/>`],
  loop: [30, svg`<path class="sg" stroke-width="3.400" d="M5 16a7 6 0 0 1 7-8h6M22 13v1a6 6 0 0 1-4 6H8"/><path class="g" d="M17 3l8 5-8 5zM12 15v10l-9-5z"/><circle class="g e" cx="22" cy="22" r="6.500"/><text x="22" y="26" class="ink" font-size="11">1</text>`],
  filmstrip: [30, svg`<rect class="k" x="2" y="6" width="25" height="19"/><path class="d" d="M3 10h23v11H3z"/><path class="g" d="M4 11h6v9H4zM11 11h6v9h-6zM18 11h6v9h-6z"/><path class="sd" stroke-dasharray="2 2" d="M3 8h23M3 23h23"/><path class="g e" d="M19 1l9 6-9 6z"/>`],
  speaker: [30, svg`<path class="g" d="M2 10h6l7-6v22l-7-6H2z"/><path class="sg" d="M18 11c2 2 2 6 0 8M21 8c4 4 4 10 0 14M24 5c5 6 5 14 0 20"/>`],
  autoKey: [30, svg`<path class="sg" stroke-width="2.400" d="M5 10A11 11 0 0 1 25 10M5 20a11 11 0 0 0 20 0"/><path class="g" d="M4 4v8h8zM26 26v-8h-8z"/><path class="k" d="M13 8h4v14h-4z"/><path class="so" d="M10 15h10"/>`],
  prefs: [30, svg`<circle class="sg" stroke-width="3" cx="8" cy="8" r="4"/><path class="sg" stroke-width="2.400" d="M8 1v3M8 12v3M1 8h3M12 8h3M3 3l2 2M11 11l2 2M13 3l-2 2M3 13l2-2"/><circle class="k" cx="23" cy="7" r="3"/><path stroke="#e08a4c" stroke-width="3" fill="none" d="M12 15l6-3 4 2-3 8-8 4M19 20l4 3v6M22 14l5 2"/>`],
  scriptEditor: [30, svg`<rect class="g" x="2" y="2" width="26" height="27"/><path class="sd" stroke-width="1.500" d="M2 7.500h26"/><path class="d" d="M4 3h2v3H4zM7 3h2v3H7zM10 3h2v3h-2z"/><text x="15" y="23" class="ink" font-size="15">{;}</text>`],
  help: [24, svg`<circle cx="12" cy="12" r="12" fill="#8ab53a"/><text x="12" y="18" class="ink" font-size="17">?</text>`],
};

@customElement('maya-icon')
export class MayaIcon extends LitElement {
  @property() name = '';

  static styles = css`
    :host { display: inline-flex; flex: none; }
    svg { display: block; overflow: visible; }
    .g { fill: #bfbfbf; }
    .o { fill: #dc9557; }
    .t { fill: #48abb8; }
    .d { fill: #3a3a3a; }
    .d0 { fill: #444; }
    .k { fill: #e08a4c; }
    .e { stroke: #3a3a3a; stroke-width: 1; }
    .eg { stroke: #bfbfbf; stroke-width: 1.5; }
    .eo { stroke: #dc9557; stroke-width: 1.5; }
    .sg, .so, .st, .sd, .se, .sl, .sw, .s5, .s8, .sk, .sk2 { fill: none; }
    .sg { stroke: #bfbfbf; }
    .so { stroke: #dc9557; }
    .st { stroke: #48abb8; }
    .sd { stroke: #3a3a3a; }
    .se { stroke: #3f3a36; stroke-width: 1.4; }
    .sl { stroke: #1aff1a; stroke-width: 2; }
    .sw { stroke: #eee; stroke-width: 2; }
    .s5 { stroke: #93a3ad; }
    .s8 { stroke: #8a8a8a; }
    .sk { stroke: #111; stroke-width: 1.4; }
    .sk2 { stroke: #bfbfbf; stroke-width: 1.4; }
    .sg:not([stroke-width]), .so:not([stroke-width]), .st:not([stroke-width]), .sd:not([stroke-width]) { stroke-width: 1.6; }
    text { font-family: "Open Sans", "Liberation Sans", sans-serif; font-weight: 700; text-anchor: middle; }
    .mark { fill: #fff; }
    .ink { fill: #3a3a3a; }
    .teal { fill: #48abb8; font-weight: 600; }
  `;

  render() {
    const glyph = GLYPHS[this.name];
    if (!glyph) return nothing;
    const [size, body] = glyph;
    return html`<svg width=${size} height=${size} viewBox="0 0 ${size} ${size}" aria-hidden="true">${body}</svg>`;
  }
}

const MENUS = ['文件', '编辑', '创建', '选择', '修改', '显示', '窗口', '网格', '编辑网格', '网格工具', '网格显示', '曲线', '曲面', '变形', 'UV', '生成', '缓存', 'Arnold', '帮助'];
const SHELVES = ['曲线', '曲面', '多边形建模', '雕刻', 'UV 编辑', '绑定', '动画', '渲染', 'FX', 'FX 缓存', '自定义', 'Arnold', 'MASH', '运动图形', 'XGen'];
const SHELF_ITEMS = ['sphere', 'cube', 'cylinder', 'cone', 'torus', 'plane', 'disc', '|', 'platonic', '|', 'star', 'helix', 'type', 'svgImport', '|',
  'contentBrowser', '|', 'orient', 'history', 'freeze', '|', 'booleanDiff', 'combine', 'separate', 'mirror', 'smooth', 'fillHole', 'triangulate', 'quadrangulate', '|',
  'extrude', 'bridge', 'bevel', 'bevelPlane', 'circularize', 'collapseEdge', 'connect', 'targetWeld', 'projectCurve', '|', 'multiCut', 'edgeLoop', 'quadDraw'];
const TOOLS = ['toolSelect', 'toolLasso', 'toolPaint', 'toolMove', 'toolRotate', 'toolScale'];
const LAYOUTS = ['layoutSingle', 'layoutFour', 'layoutTwo', 'layoutOutliner'];
const NODES = [
  { name: 'persp', icon: 'camera', dim: true },
  { name: 'top', icon: 'camera', dim: true },
  { name: 'front', icon: 'camera', dim: true },
  { name: 'side', icon: 'camera', dim: true },
  { name: 'pSphere1', icon: 'mesh', dim: false },
  { name: 'BasicHead:basicHead', icon: 'mesh', dim: false },
  { name: 'defaultLightSet', icon: 'objectSet', dim: false },
  { name: 'defaultObjectSet', icon: 'objectSet', dim: false },
];
const PANEL_TOOLS = [
  ['vA', 'vFrame', 'vRegion', 'vColor', 'vImages'],
  ['vCamera', 'vCamLock', 'vCamGear', 'vBookmark', 'vPlane', 'vZoom', 'vPencil'],
  ['vGrid', 'vFilm', 'vGate', 'vMask', 'vChart', 'vSafe', 'vTitle'],
  ['vWire', 'vShaded', 'vMaterial', 'vWireShaded', 'vTexture', 'vLight', 'vShadow'],
  ['vAo', 'vMotion', 'vAa', 'vDof'],
  ['vSelect'],
  ['vIso1', 'vIso2', 'vIso3'],
];
const ACTIVE = new Set(['selObject', 'channelBox', 'vGrid', 'vShaded', 'vOn']);
const PLAYBACK = ['playStart', 'playPrevFrame', 'playPrevKey', 'playBack', 'playForward', 'playNextKey', 'playNextFrame', 'playEnd'];
const FRAMES = Array.from({ length: 30 }, (_, i) => (i + 1) * 4);

@customElement('app-root')
export class AppRoot extends LitElement {
  @state() private tool = 'toolSelect';
  @state() private shelf = '多边形建模';

  static styles = css`
    :host {
      display: flex; flex-direction: column; min-height: 100vh; overflow: hidden;
      background: #373737; color: #bdbdbd;
      font: 18px/24px "Noto Sans", "Noto Sans CJK SC", sans-serif;
    }
    * { box-sizing: border-box; }
    button, input, select { font: inherit; color: inherit; border: 0; margin: 0; padding: 0; background: none; border-radius: 0; appearance: none; outline: none; min-width: 0; }
    ul { list-style: none; margin: 0; padding: 0; }
    .dots { background-image: conic-gradient(at 2px 2px, transparent 75%, #868686 0); background-size: 5px 5px; }
    .grip { flex: none; width: 20px; align-self: stretch; padding: 4px 9px 4px 4px; display: flex; }
    .grip .dots { flex: none; width: 7px; }

    .titlebar { display: flex; align-items: center; height: 34px; padding: 0 2px 0 3px; gap: 5px; color: #111; font-family: "Open Sans", "Noto Sans CJK SC", sans-serif; background: linear-gradient(90deg, #fbf1f1, #f7f1f1 30%, #f2f3f2 45%, #f6f2f1 65%, #f1f3f4 85%, #f3f3f3); }
    .titlebar .title { flex: 1; }
    .winbtn { width: 70px; height: 34px; display: flex; align-items: center; justify-content: center; }

    .menubar { display: flex; height: 45px; background: #444; padding: 0 8px 0 10px; }
    .menus { display: flex; gap: 25px; align-items: center; }
    .menubar .menus { margin-left: 17px; flex: 1; }
    .homebtn { display: flex; align-items: center; }
    .workspace { display: flex; align-items: center; gap: 5px; padding-bottom: 8px; }
    .workspace .pick { width: 226px; height: 29px; margin-right: 12px; }

    .pick { display: grid; grid-template-columns: 1fr 30px; background: #5d5d5d; border-radius: 2px; height: 33px; }
    .pick select { grid-area: 1 / 1 / 2 / 3; padding: 0 34px 0 5px; width: 100%; }
    .pick .arrow { grid-area: 1 / 2; pointer-events: none; border-left: 1px solid #4a4a4a; display: flex; align-items: center; justify-content: center; }
    .tri { width: 14px; height: 8px; background: #c4c4c4; clip-path: polygon(0 0, 100% 0, 50% 100%); }
    .tri.small { width: 10px; height: 6px; background: #8c8c8c; }
    .tri.up { clip-path: polygon(50% 0, 100% 100%, 0 100%); }
    .tri.left { width: 8px; height: 14px; clip-path: polygon(100% 0, 100% 100%, 0 50%); }
    .tri.right { width: 8px; height: 14px; clip-path: polygon(0 0, 100% 50%, 0 100%); }

    .status { display: flex; align-items: center; height: 40px; background: #444; padding-right: 2px; }
    .status .pick.mode { width: 147px; }
    .cell { width: 35px; height: 34px; flex: none; display: flex; align-items: center; justify-content: center; border-radius: 2px; }
    .cell.on { background: #5285a6; }
    .sep { flex: none; width: 32px; height: 30px; background: linear-gradient(#8c8c8c, #8c8c8c) center / 1px 100% no-repeat, linear-gradient(#8c8c8c, #8c8c8c) center / 5px 16px no-repeat; }
    .fold { flex: none; width: 28px; height: 30px; display: flex; justify-content: center; }
    .fold i { width: 6px; border-left: 1px solid #8c8c8c; background: linear-gradient(#8c8c8c, #8c8c8c) left / 6px 16px no-repeat; clip-path: polygon(0 0, 1px 0, 1px 25%, 100% 50%, 1px 75%, 1px 100%, 0 100%); }
    .drop { flex: none; width: 27px; display: flex; justify-content: center; }
    .field { width: 150px; height: 34px; padding: 0 8px; border: 2px solid #4d4d4d; border-radius: 3px; background: #404040; }
    .login { width: 180px; height: 33px; background: #5d5d5d; display: flex; align-items: center; padding: 0 2px 0 3px; gap: 4px; color: #eee; }
    .login span { flex: 1; text-align: left; }
    .login .tri { background: #eee; }
    .push { margin-left: auto; display: flex; }

    .shelf { display: flex; border-top: 4px solid #373737; background: #444; height: 104px; margin-bottom: 4px; padding-top: 3px; }
    .shelf .grip { width: 22px; }
    .shelfside { width: 30px; margin-right: 5px; background: #373737; display: flex; flex-direction: column; align-items: center; justify-content: space-between; padding: 18px 0 12px; margin-bottom: 4px; }
    .bars { width: 12px; height: 6px; border-top: 2px solid #999; border-bottom: 2px solid #999; background: #6d6d6d; }
    .shelfmain { flex: 1; display: flex; flex-direction: column; min-width: 0; }
    .tabs { display: flex; gap: 2px; background: #373737; height: 29px; padding: 2px 0 0 2px; align-items: stretch; }
    .tab { padding: 0 16px; border: 1px solid #2c2c2c; border-bottom: 0; border-radius: 3px 3px 0 0; color: #8e8e8e; line-height: 26px; }
    .tab.on { background: #444; border-color: #444; color: #eee; }
    .items { flex: 1; display: flex; align-items: center; padding-bottom: 4px; }
    .grid { flex: 1; display: grid; grid-template-columns: repeat(43, 1fr); padding: 0 195px 0 6px; align-items: center; }
    .grid button, .grid span { display: flex; justify-content: center; align-items: center; height: 52px; min-width: 0; }
    .grid i { width: 2px; height: 52px; background: #999; }
    .grid .live { background: linear-gradient(#1aff1a, #1aff1a) left top / 6px 2px, linear-gradient(#1aff1a, #1aff1a) left bottom / 6px 2px, linear-gradient(#1aff1a, #1aff1a) right top / 6px 2px, linear-gradient(#1aff1a, #1aff1a) right bottom / 6px 2px; background-repeat: no-repeat; border: solid #1aff1a; border-width: 0 1px; }
    .shelfscroll { width: 18px; height: 52px; margin-right: 10px; background: #373737; display: flex; flex-direction: column; align-items: center; justify-content: space-between; padding: 5px 0; }
    .shelfscroll i { width: 16px; height: 14px; border-radius: 7px; background: #5d5d5d; }
    .shelfscroll .tri { background: #a5a5a5; }

    .main { flex: 1; display: flex; min-height: 0; }
    .toolbox { width: 66px; flex: none; background: #444; display: flex; flex-direction: column; align-items: center; gap: 1px; padding-bottom: 6px; }
    .toolbox .dots { width: 64px; height: 7px; margin: 4px 0 6px; }
    .toolbox button { display: flex; border-radius: 3px; }
    .toolbox button.on { background: #5285a6; }
    .rule { width: 54px; height: 2px; background: #999; margin: 7px 0; }
    .rule.first { margin-top: 117px; }
    .spring { flex: 1; }

    .outliner { width: 393px; flex: none; margin-left: 4px; display: flex; flex-direction: column; }
    .dock { display: flex; padding: 2px 0 0 2px; }
    .dock button { background: #444; color: #eee; height: 27px; padding: 0 17px 0 16px; border-radius: 3px 3px 0 0; }
    .outbody { flex: 1; background: #444; display: flex; flex-direction: column; padding: 0 4px 8px; }
    .outbody .menus { padding: 7px 0 10px 13px; }
    .find { display: flex; align-items: center; gap: 8px; padding: 0 1px 3px 8px; }
    .findbox { flex: 1; display: flex; align-items: center; background: #2b2b2b; height: 32px; border-radius: 2px; padding: 0 5px; }
    .findbox input { flex: 1; }
    input::placeholder { color: #7c7c7c; opacity: 1; }
    .listwrap { flex: 1; display: grid; grid-template: 1fr 16px / 1fr 16px; background: #373737; }
    .node { display: flex; align-items: center; gap: 3px; height: 30px; padding-left: 51px; color: #bdbdbd; }
    .node.dim { color: #656565; }
    .vbar { display: flex; flex-direction: column; align-items: center; gap: 7px; padding: 5px 0 8px; }
    .vbar i { flex: 1; width: 16px; border-radius: 6px; background: #5d5d5d; }
    .hbar { display: flex; align-items: center; gap: 7px; padding: 0 8px 0 5px; }
    .hbar i { flex: 1; height: 16px; border-radius: 6px; background: #5d5d5d; }
    .vbar .tri, .hbar .tri { background: #a5a5a5; }
    .pull { width: 128px; height: 2px; margin: 4px auto 0; background: conic-gradient(at 2px 2px, transparent 75%, #868686 0) 0 0 / 6px 2px; }

    .viewport { flex: 1; min-width: 0; margin-left: 4px; padding: 3px; background: #444; display: flex; }
    .frame { flex: 1; min-width: 0; display: flex; flex-direction: column; border: 1px solid #888; }
    .frame .menus { padding: 5px 0 3px 14px; }
    .vtools { display: flex; align-items: center; height: 32px; overflow: hidden; }
    .vtools .sep { width: 15px; height: 24px; background-size: 1px 100%, 3px 12px; }
    .vtools .sep:first-child { width: 13px; }
    .vcell { width: 29px; height: 28px; flex: none; display: flex; align-items: center; justify-content: center; border-radius: 2px; }
    .vcell.on { background: #5285a6; }
    .num { width: 58px; height: 23px; flex: none; margin: 0 2px; padding: 0 9px; background: #2b2b2b; border-radius: 2px; color: #d0d0d0; }
    .ace { flex: none; width: 260px; height: 27px; margin-left: 2px; padding-left: 5px; background: #5d5d5d; border-radius: 2px; font-size: 18px; }
    .canvas { flex: 1; position: relative; background: #5d5d5d; }
    .canvas svg { position: absolute; display: block; overflow: visible; }
    .ground { left: 35%; top: 57.5%; }
    .cube { right: 36px; top: 38px; }
    .axes { left: 30px; bottom: 28px; }
    .cube text { font-family: "Noto Sans CJK SC", sans-serif; text-anchor: middle; fill: #41444c; }
    .axes text { font: 700 15px "Liberation Sans", sans-serif; text-anchor: middle; }

    .attr { width: 693px; flex: none; margin-left: 3px; background: #444; display: flex; flex-direction: column; padding: 0 2px 6px 3px; }
    .attrhead { display: flex; align-items: center; justify-content: space-between; padding: 14px 13px 0 14px; height: 38px; }
    .attrbody { flex: 1; display: flex; align-items: center; justify-content: center; font-weight: 700; color: #b4b4b4; padding-top: 5px; }
    .actions { display: grid; grid-template-columns: 225px 1fr 226px; gap: 2px; }
    .actions button { height: 40px; background: #494949; color: #7c7c7c; border-radius: 2px; }
    .actions button.on { background: #5d5d5d; color: #eee; }
    .sidetabs { width: 29px; flex: none; display: flex; flex-direction: column; gap: 2px; padding-top: 2px; position: relative; }
    .sidetabs button { writing-mode: vertical-rl; text-orientation: sideways; padding: 16px 1px; width: 29px; line-height: 24px; border: 1px solid #2c2c2c; border-left: 0; border-radius: 0 3px 3px 0; color: #8e8e8e; }
    .sidetabs button.on { background: #444; border-color: #444; color: #eee; }
    .meter { position: absolute; right: 0; top: 615px; width: 15px; height: 88px; background: #343946; border: 1px solid #1d2026; border-right: 0; border-radius: 4px 0 0 4px; padding: 8px 2px 8px 5px; display: flex; }
    .meter i { flex: 1; background: repeating-linear-gradient(transparent 0 2px, #2a2d38 2px 3px), linear-gradient(#23262f 38%, #c9ad2b 38%, #8fb55c 65%, #35b5a4); }

    .time { display: flex; height: 72px; margin-top: 4px; background: #444; align-items: center; padding-right: 5px; }
    .time .grip { width: 24px; }
    .track { flex: 1; align-self: stretch; display: grid; grid-template-columns: 63px repeat(29, 1fr) 30px; position: relative; overflow: hidden; background: linear-gradient(#444 12px, #2b2b2b 12px 60px, #444 60px); }
    .tick { border-left: 1px solid; border-image: linear-gradient(#222 12px, transparent 12px 36px, #999 36px 59px, #222 59px) 1; padding: 12px 0 0 12px; color: #999; white-space: nowrap; min-width: 0; }
    .now { position: absolute; left: 12px; top: 0; bottom: 0; width: 17px; background: rgba(255, 255, 255, .1); padding-top: 36px; display: flex; justify-content: flex-end; align-items: flex-start; }
    .now b { width: 11px; height: 22px; line-height: 18px; font-weight: 400; background: #252525; border-radius: 3px 0 0 3px; color: #fff; text-indent: 2px; }
    .value { width: 88px; flex: none; height: 32px; background: #2b2b2b; border-radius: 2px; padding: 0 9px; color: #d0d0d0; }
    .time .value { margin: 0 7px 0 13px; }
    .play { width: 42px; height: 40px; display: flex; align-items: center; justify-content: center; }

    .range { display: flex; height: 54px; margin-top: 4px; background: #444; align-items: center; }
    .range .grip { width: 25px; }
    .slider { flex: 1; margin: 0 13px; height: 30px; background: #2b2b2b; border-radius: 4px; padding: 4px; }
    .span { width: 61%; height: 22px; background: #444; display: flex; align-items: center; gap: 12px; color: #c4c4c4; }
    .span i { width: 11px; height: 22px; background: #999; border-radius: 1px; }
    .span .dots { width: 7px; height: 12px; margin: 0 auto; }
    .range .sep { width: 63px; }
    .range .field { width: 154px; }
    .range .drop { width: 32px; }
    .range .field + .drop { margin-left: 14px; }
    .range .pick { width: 142px; height: 29px; margin-right: 10px; }
    .rcell { width: 48px; height: 34px; display: flex; align-items: center; justify-content: center; }
    .rcell.bm { width: 33px; }
    .tail { display: flex; align-items: center; padding-right: 4px; }
    .sound { display: flex; align-items: center; }
    .range .sound .sep { width: 49px; }
    .sound .rcell { width: 44px; }

    .command { display: flex; height: 54px; margin-top: 4px; background: #444; align-items: center; }
    .command .grip { width: 24px; }
    .hint { flex: 1062; display: flex; align-items: center; gap: 12px; font-size: 16px; color: #e6e6e6; }
    .wall { width: 4px; height: 54px; background: #373737; }
    .mel { flex: 1446; display: flex; align-items: center; color: #e6e6e6; }
    .mel input { height: 30px; background: #2b2b2b; border-radius: 2px; flex: 596; margin-left: 9px; }
    .mel input.out { flex: 739; margin: 0 13px 0 3px; }
    .mel .split { width: 2px; height: 14px; margin-left: 4px; background: conic-gradient(at 2px 2px, transparent 75%, #868686 0) 0 0 / 2px 6px; }
    .mel button { margin-right: 14px; }
  `;

  private cell(name: string, cls = 'cell'): TemplateResult {
    return html`<button class=${classMap({ [cls]: true, on: ACTIVE.has(name) })} aria-label=${name}><maya-icon name=${name}></maya-icon></button>`;
  }

  private cells(names: string[]) { return names.map((n) => this.cell(n)); }

  private sep() { return html`<span class="sep"></span>`; }
  private fold() { return html`<span class="fold"><i></i></span>`; }
  private drop() { return html`<button class="drop" aria-label="展开"><span class="tri small"></span></button>`; }
  private grip() { return html`<span class="grip"><span class="dots"></span></span>`; }

  private pick(id: string, text: string, cls = '') {
    return html`<span class="pick ${cls}"><select id=${id} aria-label=${text}><option>${text}</option></select><span class="arrow"><span class="tri"></span></span></span>`;
  }

  private menus(items: string[]) {
    return html`<nav class="menus">${items.map((m) => html`<button>${m}</button>`)}</nav>`;
  }

  private renderHeader() {
    return html`
      <header class="titlebar">
        <maya-icon name="mayaSmall"></maya-icon>
        <span class="title">无标题* - Autodesk MAYA 2024: 无标题</span>
        <span class="push">${['minimize', 'restore', 'close'].map((n) => this.cell(n, 'winbtn'))}</span>
      </header>
      <div class="menubar">
        <button class="homebtn" aria-label="主页"><maya-icon name="home"></maya-icon></button>
        ${this.menus(MENUS)}
        <div class="workspace">
          <label for="workspace">工作区:</label>
          ${this.pick('workspace', '常规*')}
          <button aria-label="锁定"><maya-icon name="lock"></maya-icon></button>
        </div>
      </div>
      <div class="status">
        ${this.grip()}${this.pick('mode', '建模', 'mode')}${this.sep()}
        ${this.cells(['fileNew', 'fileOpen', 'fileSave', 'undo', 'redo'])}${this.fold()}${this.sep()}
        ${this.cells(['selHierarchy', 'selObject', 'selComponent'])}${this.fold()}${this.sep()}
        ${this.cells(['snapGrid', 'snapCurve', 'snapPoint', 'snapCenter', 'snapPlane', 'makeLive'])}${this.drop()}
        <input class="field" aria-label="激活曲面" .value=${'无激活曲面'}>${this.sep()}${this.drop()}
        <input class="field" aria-label="对称" .value=${'对称: 禁用'}>${this.fold()}${this.sep()}
        ${this.cells(['renderEye', 'renderFrame', 'renderIpr', 'renderSettings', 'hypershade', 'renderSetup', 'lightEditor', 'pause'])}${this.fold()}${this.sep()}
        <button class="login"><maya-icon name="user"></maya-icon><span>登录</span><i class="tri"></i></button>
        ${this.cell('xgenRing')}
        <span class="push">${this.cells(['modelingKit', 'humanIk', 'channelBox', 'toolSettings', 'layerStack'])}</span>
      </div>`;
  }

  private renderShelf() {
    return html`
      <section class="shelf">
        ${this.grip()}
        <div class="shelfside"><span class="bars"></span><button aria-label="工具架选项"><maya-icon name="gearSmall"></maya-icon></button></div>
        <div class="shelfmain">
          <div class="tabs" role="tablist">
            ${SHELVES.map((s) => html`<button role="tab" class=${classMap({ tab: true, on: s === this.shelf })} @click=${() => (this.shelf = s)}>${s}</button>`)}
          </div>
          <div class="items">
            <div class="grid">
              ${SHELF_ITEMS.map((n) => n === '|'
                ? html`<span><i></i></span>`
                : html`<button class=${n === 'quadrangulate' ? 'live' : ''} aria-label=${n}><maya-icon name=${n}></maya-icon></button>`)}
            </div>
            <div class="shelfscroll"><span class="tri up"></span><i></i><span class="tri"></span></div>
          </div>
        </div>
      </section>`;
  }

  private renderToolbox() {
    return html`
      <aside class="toolbox">
        <span class="dots"></span>
        ${TOOLS.map((n) => html`<button class=${n === this.tool ? 'on' : ''} aria-label=${n} @click=${() => (this.tool = n)}><maya-icon name=${n}></maya-icon></button>`)}
        <span class="rule first"></span>
        ${LAYOUTS.map((n) => html`<button class=${n === 'layoutOutliner' ? 'on' : ''} aria-label=${n}><maya-icon name=${n}></maya-icon></button>`)}
        <span class="rule"></span>
        <button aria-label="搜索"><maya-icon name="search"></maya-icon></button>
        <span class="spring"></span>
        <maya-icon name="maya"></maya-icon>
      </aside>`;
  }

  private renderOutliner() {
    return html`
      <section class="outliner">
        <div class="dock"><button>大纲视图</button></div>
        <div class="outbody">
          ${this.menus(['展示', '显示', '帮助'])}
          <div class="find">
            <button aria-label="过滤"><maya-icon name="filter"></maya-icon></button>
            <span class="findbox"><input aria-label="搜索" placeholder="搜索..."><span class="tri"></span></span>
          </div>
          <div class="listwrap">
            <ul>${NODES.map((n) => html`<li class=${classMap({ node: true, dim: n.dim })}><maya-icon name=${n.icon}></maya-icon>${n.name}</li>`)}</ul>
            <div class="vbar"><span class="tri up"></span><i></i><span class="tri"></span></div>
            <div class="hbar"><span class="tri left"></span><i></i><span class="tri right"></span></div>
          </div>
          <span class="pull"></span>
        </div>
      </section>`;
  }

  private groundGrid() {
    const a = [0, 44], b = [67, 0], c = [157, 25], d = [94, 73];
    const mix = (p: number[], q: number[], t: number) => [p[0] + (q[0] - p[0]) * t, p[1] + (q[1] - p[1]) * t];
    const n = 24;
    const lines: SVGTemplateResult[] = [];
    for (let i = 0; i <= n; i++) {
      const t = i / n;
      const w = i === n / 2 ? 2 : 1;
      for (const [p, q] of [[mix(a, b, t), mix(d, c, t)], [mix(a, d, t), mix(b, c, t)]]) {
        lines.push(svg`<line x1=${p[0]} y1=${p[1]} x2=${q[0]} y2=${q[1]} stroke="#3c3c3c" stroke-width=${w}/>`);
      }
    }
    return html`<svg class="ground" width="157" height="73" shape-rendering="crispEdges">${lines}</svg>`;
  }

  private renderViewport() {
    return html`
      <section class="viewport">
        <div class="frame">
          ${this.menus(['视图', '着色', '照明', '显示', '渲染器', '面板'])}
          <div class="vtools">
            ${PANEL_TOOLS.map((group) => html`${this.sep()}${group.map((n) => this.cell(n, 'vcell'))}`)}
            ${this.sep()}${this.cell('vExposure', 'vcell')}
            <input class="num" aria-label="曝光" .value=${'0.00'}>
            ${this.cell('vGamma', 'vcell')}
            <input class="num" aria-label="伽马" .value=${'1.00'}>
            ${this.cell('vOn', 'vcell')}
            <select class="ace" aria-label="视图变换"><option>ACE</option></select>
          </div>
          <div class="canvas">
            ${this.groundGrid()}
            <svg class="cube" width="102" height="104" viewBox="0 0 102 104">
              <defs>
                <linearGradient id="cf" x1="0" y1="0" x2="0" y2="1"><stop offset="0" stop-color="#bdbdbd"/><stop offset="1" stop-color="#949494"/></linearGradient>
              </defs>
              <path d="M1 53 40 36 96 46 94 110 66 135 5 117z" fill="#6a6a6a" transform="translate(1 -33)"/>
              <path d="M7 18 41 4 93 13 66 34z" fill="#b2b2b2"/>
              <path d="M2 22 64 39 63 99 7 82z" fill="url(#cf)"/>
              <path d="M68 38 96 19 93 74 67 97z" fill="url(#cf)"/>
              <text transform="translate(32 71) skewY(12)" font-size="38">左</text>
              <text transform="translate(82 69) skewY(-32)" font-size="24">前</text>
              <text transform="matrix(.79 -.61 .96 .26 58 20)" font-size="22">上</text>
            </svg>
            <svg class="axes" width="40" height="50" viewBox="0 0 40 50">
              <path d="M8 39V18" stroke="#0f0"/><path d="M8 39l11-9" stroke="#f00"/><path d="M8 39l20 5" stroke="#00f" stroke-width="1.500"/>
              <text x="8" y="13" fill="#0f0">y</text><text x="20" y="26" fill="#f00">x</text><text x="29" y="39" fill="#00f">z</text>
            </svg>
          </div>
        </div>
      </section>`;
  }

  private renderAttributes() {
    return html`
      <section class="attr">
        <div class="attrhead">
          ${this.menus(['列表', '选定', '关注', '属性', '展示', '显示', '帮助'])}
          <button aria-label="固定"><maya-icon name="pin"></maya-icon></button>
        </div>
        <div class="attrbody">选择场景中的对象以查看和编辑其属性</div>
        <div class="actions"><button>选择</button><button class="on">加载属性</button><button>复制选项卡</button></div>
      </section>
      <div class="sidetabs">
        <button>通道盒/层编辑器</button><button class="on">属性编辑器</button><button>建模工具包</button>
        <span class="meter"><i></i></span>
      </div>`;
  }

  private renderFooter() {
    return html`
      <section class="time">
        ${this.grip()}
        <div class="track">
          <span></span>
          ${FRAMES.map((f) => html`<span class="tick">${f}</span>`)}
          <span class="now"><b>1</b></span>
        </div>
        <input class="value" aria-label="当前帧" .value=${'1'}>
        ${PLAYBACK.map((n) => this.cell(n, 'play'))}
      </section>
      <section class="range">
        ${this.grip()}
        <input class="value" aria-label="起始帧" .value=${'1'}>
        <div class="slider"><div class="span"><i></i><span>1</span><span class="dots"></span><span>120</span><i></i></div></div>
        <input class="value" aria-label="结束帧" .value=${'200'}>
        <div class="tail">
          <span class="sep"></span><button class="rcell bm" aria-label="书签"><maya-icon name="bookmarkAdd"></maya-icon></button><span class="sep"></span>
          ${this.drop()}<input class="field" aria-label="角色集" .value=${'无角色集'}>
          ${this.drop()}<input class="field" aria-label="动画层" .value=${'无动画层'}>
          <span class="sep"></span>
          ${this.pick('fps', '24 fps')}
          ${this.cell('loop', 'rcell')}${this.cell('filmstrip', 'rcell')}
          <span class="sound"><span class="sep"></span>${this.cell('speaker', 'rcell')}${this.cell('autoKey', 'rcell')}${this.cell('prefs', 'rcell')}</span>
        </div>
      </section>
      <footer class="command">
        ${this.grip()}
        <div class="hint"><maya-icon name="help"></maya-icon>选择工具: 选择一个对象</div>
        <span class="wall"></span>
        ${this.grip()}
        <div class="mel">
          <label for="mel">MEL</label><input id="mel"><span class="split"></span><input class="out" aria-label="结果">
          <button aria-label="脚本编辑器"><maya-icon name="scriptEditor"></maya-icon></button>
        </div>
      </footer>`;
  }

  render() {
    return html`
      ${this.renderHeader()}
      ${this.renderShelf()}
      <main class="main">
        ${this.renderToolbox()}${this.renderOutliner()}${this.renderViewport()}${this.renderAttributes()}
      </main>
      ${this.renderFooter()}`;
  }
}
